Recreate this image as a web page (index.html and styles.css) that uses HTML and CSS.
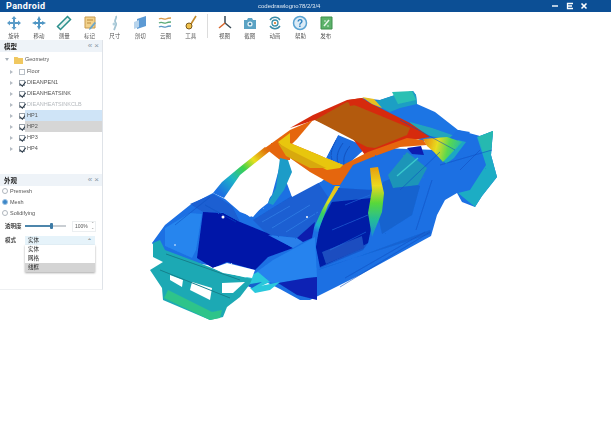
FILE: index.html
```html
<!DOCTYPE html>
<html lang="zh">
<head>
<meta charset="utf-8">
<title>Pandroid</title>
<link rel="stylesheet" href="styles.css">
</head>
<body>
<div class="app">
  <header class="titlebar">
    <span class="brand">Pandroid</span>
    <span class="doc">codedrawlogno78/2/3/4</span>
    <div class="winctl">
      <svg width="8" height="8" viewBox="0 0 8 8"><path d="M1 4h6" stroke="#fff" stroke-width="1.4"/></svg>
      <svg width="8" height="8" viewBox="0 0 8 8"><path d="M7 1.500H1.500v5H7M1.500 4H6" fill="none" stroke="#fff" stroke-width="1.3"/></svg>
      <svg width="8" height="8" viewBox="0 0 8 8"><path d="M1.500 1.500l5 5M6.500 1.500l-5 5" stroke="#fff" stroke-width="1.6"/></svg>
    </div>
  </header>

  <nav class="toolbar">
    <div class="tool"><svg width="16" height="16" viewBox="0 0 16 16"><path d="M8 1l2.500 3H9v3h3V5.500l3 2.500-3 2.500V9H9v3h1.500L8 15l-2.500-3H7V9H4v1.500L1 8l3-2.500V7h3V4H5.500z" fill="#5b9cc8"/></svg><span>旋转</span></div>
    <div class="tool"><svg width="16" height="16" viewBox="0 0 16 16"><path d="M8 1l2 4H9v2h2V6l4 2-4 2V9H9v2h1l-2 4-2-4h1V9H5v1L1 8l4-2v1h2V5H6z" fill="#4f96c4"/></svg><span>移动</span></div>
    <div class="tool"><svg width="16" height="16" viewBox="0 0 16 16"><path d="M11.500 1.500l3 3-10 10-3-3z" fill="#e8f4f2" stroke="#2a8f8c" stroke-width="1.500"/></svg><span>测量</span></div>
    <div class="tool"><svg width="16" height="16" viewBox="0 0 16 16"><path d="M3 2h10v11H3z" fill="#f2d28c" stroke="#c79a4e"/><path d="M5 5h6M5 8h4" stroke="#b98a3c"/><path d="M14 8l-5 6-2 1 .5-2 5-6z" fill="#6aa6cc"/></svg><span>标记</span></div>
    <div class="tool"><svg width="16" height="16" viewBox="0 0 16 16"><path d="M9 1c1 2-1 3-1 5s2 2 1 4-1 3-2 5" fill="none" stroke="#a3c4d3" stroke-width="1.800"/><circle cx="7" cy="9" r="1.500" fill="#b4d1de"/></svg><span>尺寸</span></div>
    <div class="tool"><svg width="16" height="16" viewBox="0 0 16 16"><path d="M5 4l9-3v10l-9 3z" fill="#5c9ad4"/><path d="M2 7l5-2v7l-5 2z" fill="#b8d4ec"/></svg><span>剖切</span></div>
    <div class="tool"><svg width="16" height="16" viewBox="0 0 16 16"><path d="M2 4c3-2 5 1 7 0s3-1 5-1" fill="none" stroke="#d99a4a" stroke-width="1.300"/><path d="M2 8c3-2 5 1 7 0s3-1 5-1" fill="none" stroke="#5aaa78" stroke-width="1.300"/><path d="M2 12c3-2 5 1 7 0s3-1 5-1" fill="none" stroke="#5a98c4" stroke-width="1.300"/></svg><span>云图</span></div>
    <div class="tool"><svg width="16" height="16" viewBox="0 0 16 16"><path d="M13 1L8 9" stroke="#c28a2c" stroke-width="1.600"/><circle cx="6" cy="11" r="3" fill="#f1c24c" stroke="#7a5a1e"/></svg><span>工具</span></div>
    <i class="sep"></i>
    <div class="tool"><svg width="16" height="16" viewBox="0 0 16 16"><path d="M8 1v7M8 8l6 5" fill="none" stroke="#3a4a55" stroke-width="1.500"/><path d="M8 8l-6 5" stroke="#d9652a" stroke-width="1.500"/></svg><span>视图</span></div>
    <div class="tool"><svg width="16" height="16" viewBox="0 0 16 16"><path d="M2 5h3l1-2h4l1 2h3v9H2z" fill="#5ba3c4"/><circle cx="8" cy="9" r="2.600" fill="#e6f3f8"/><circle cx="8" cy="9" r="1.300" fill="#3d86aa"/></svg><span>截图</span></div>
    <div class="tool"><svg width="16" height="16" viewBox="0 0 16 16"><path d="M3 5a6 6 0 0 1 10 0M13 11a6 6 0 0 1-10 0" fill="none" stroke="#3a8aa6" stroke-width="1.400"/><circle cx="8" cy="8" r="3" fill="none" stroke="#3a8fa8" stroke-width="1.300"/><circle cx="8" cy="8" r="1.100" fill="#d9762a"/></svg><span>动画</span></div>
    <div class="tool"><svg width="16" height="16" viewBox="0 0 16 16"><circle cx="8" cy="8" r="6.500" fill="#dcebf6" stroke="#5aa3d2" stroke-width="1.500"/><text x="8" y="11.500" class="qmark">?</text></svg><span>帮助</span></div>
    <div class="tool"><svg width="16" height="16" viewBox="0 0 16 16"><path d="M3 2h11v12H3z" fill="#5cb26a" stroke="#3f8f4d"/><path d="M6 11l5-6" stroke="#e8f6ea" stroke-width="1.500"/><path d="M6 6h2M9 11h2" stroke="#d8efdc"/></svg><span>发布</span></div>
  </nav>

  <main class="main">
    <aside class="side">
      <section class="panel tree-panel">
        <div class="phead"><b>模型</b><span class="pctl">«&nbsp;×</span></div>
        <div class="row root"><i class="arr down"></i>
          <svg class="folder" width="9" height="8" viewBox="0 0 9 8"><path d="M0 1h3.500l1 1H9v6H0z" fill="#f0c860"/></svg>
          <span>Geometry</span></div>
        <div class="row"><i class="arr"></i><i class="chk off"></i><span>Floor</span></div>
        <div class="row"><i class="arr"></i><i class="chk"></i><span>DIEANPEN1</span></div>
        <div class="row"><i class="arr"></i><i class="chk"></i><span>DIEANHEATSINK</span></div>
        <div class="row"><i class="arr"></i><i class="chk"></i><span class="dim">DIEANHEATSINKCLB</span></div>
        <div class="row"><i class="arr"></i><i class="chk"></i><span class="sel-b">HP1</span></div>
        <div class="row"><i class="arr"></i><i class="chk"></i><span class="sel-g">HP2</span></div>
        <div class="row"><i class="arr"></i><i class="chk"></i><span>HP3</span></div>
        <div class="row"><i class="arr"></i><i class="chk"></i><span>HP4</span></div>
      </section>
      <section class="panel set-panel">
        <div class="phead"><b>外观</b><span class="pctl">«&nbsp;×</span></div>
        <div class="radio"><i class="rd"></i><span>Premesh</span></div>
        <div class="radio"><i class="rd on"></i><span>Mesh</span></div>
        <div class="radio"><i class="rd"></i><span>Solidifying</span></div>
        <div class="form slider-row"><b>透明度</b>
          <div class="slider"><i class="thumb"></i></div>
          <div class="spin">100%<em>⌃<br>⌄</em></div>
        </div>
        <div class="form select-row"><b>模式</b>
          <div class="select"><span>实体</span><em>⌃</em>
            <ul class="list"><li>实体</li><li>网格</li><li class="cur">线框</li></ul>
          </div>
        </div>
      </section>
    </aside>

    <section class="view">
      <svg class="car" width="508" height="387" viewBox="103 40 508 387">
        <defs>
          <linearGradient id="ga" gradientUnits="userSpaceOnUse" x1="222" y1="195" x2="266" y2="150">
            <stop offset="0" stop-color="#1b6fe3"/><stop offset=".3" stop-color="#1fb5c6"/><stop offset=".55" stop-color="#3ed24a"/><stop offset=".75" stop-color="#eadf1e"/><stop offset="1" stop-color="#e0700c"/>
          </linearGradient>
          <linearGradient id="gb" gradientUnits="userSpaceOnUse" x1="372" y1="168" x2="372" y2="238">
            <stop offset="0" stop-color="#e8a00e"/><stop offset=".25" stop-color="#ecd920"/><stop offset=".5" stop-color="#58d83a"/><stop offset=".75" stop-color="#22bb9a"/><stop offset="1" stop-color="#1c88d8"/>
          </linearGradient>
          <linearGradient id="gc" gradientUnits="userSpaceOnUse" x1="337" y1="187" x2="315" y2="232">
            <stop offset="0" stop-color="#efb818"/><stop offset=".35" stop-color="#d8e020"/><stop offset=".6" stop-color="#38d060"/><stop offset=".85" stop-color="#1cb0d0"/><stop offset="1" stop-color="#1b6fe3"/>
          </linearGradient>
          <linearGradient id="gd" gradientUnits="userSpaceOnUse" x1="424" y1="140" x2="462" y2="150">
            <stop offset="0" stop-color="#ea8a0e"/><stop offset=".35" stop-color="#e8dc20"/><stop offset=".65" stop-color="#58d850"/><stop offset="1" stop-color="#20b8b0"/>
          </linearGradient>
          <filter id="rough" x="-5%" y="-5%" width="110%" height="110%">
            <feTurbulence type="fractalNoise" baseFrequency="0.6" numOctaves="2" seed="4" result="n"/>
            <feDisplacementMap in="SourceGraphic" in2="n" scale="1.500"/>
            <feGaussianBlur stdDeviation="0.400"/>
          </filter>
        </defs>
        <g filter="url(#rough)">
          <!-- far-side trunk -->
          <path d="M362 98L380 100 395 95 413 91 416 95 417 104 435 112 458 130 470 132 456 150 420 140 395 128Z" fill="#1c74e4"/>
          <path d="M370 102L380 100 395 95 413 91 416 95 417 104 400 108 390 112Z" fill="#1f9fc4"/>
          <path d="M392 92L412 91 416 100 398 104Z" fill="#2bc0b4"/>
          <path d="M410 122L432 128 458 137 456 141 430 136 412 130Z" fill="#22a5bc"/>
          <!-- main body -->
          <path d="M152 243L165 225 190 205 213 193 225 199 240 212 253 217 272 195 280 165 292 197 322 181 345 165 380 148 437 150 458 130 480 136 493 131 491 155 497 177 482 196 475 207 462 202 457 193 445 200 437 215 431 236 360 275 310 300 300 300 280 289 258 278 225 268 190 262 163 258Z" fill="#1b6fe3"/>
          <!-- arcs under roof -->
          <path d="M338 135L367 147 345 167 343 165 326 158Z" fill="#1a6ce0"/>
          <path d="M336 140C332 148 330 153 332 160M343 143C338 150 336 156 338 163M350 146C345 152 343 158 344 165" fill="none" stroke="#0f4bb8" stroke-width=".8"/>
          <!-- cowl interior -->
          <path d="M253 220L290 197 318 182 328 197 313 230 297 238 268 235Z" fill="#1a5fd2"/>
          <path d="M262 222L290 206M272 228L310 205M286 232L318 212" stroke="#3d8cec" stroke-width=".8" opacity=".7"/>
          <path d="M338 188L372 190 372 225 368 243 363 250 320 268 316 247 320 224Z" fill="#1458cc"/>
          <path d="M332 202L372 198 372 223 368 243 344 256 320 267 316 247 320 224Z" fill="#001aa6"/>
          <path d="M322 252L362 236 364 248 326 264Z" fill="#1a4ec0"/>
          <!-- rear door opening -->
          <path d="M383 182L395 177 420 186 412 215 382 234 378 215Z" fill="#1763cf"/>
          <path d="M388 175L407 152 427 168 418 185 393 188Z" fill="#1b95b8"/>
          <path d="M407 148L421 146 424 155 412 154Z" fill="#0a1fb0"/>
          <path d="M397 176L418 158" stroke="#3fd0d0" stroke-width="1.400" opacity=".9"/>
          <!-- rear quarter -->
          <path d="M458 193L475 207 482 196 497 177 491 155 493 131 477 137 486 165 470 190Z" fill="#1fadc4"/>
          <path d="M478 137L493 131 491 150 483 152Z" fill="#27b9b0"/>
          <path d="M443 160L458 140 466 142 454 158 446 164Z" fill="#1fa8c2"/>
          <!-- red surround of roof -->
          <path d="M290 128L313 115 347 100 362 98 370 103 410 123 423 132 430 137 407 141 378 152 365 155 350 135 315 120Z" fill="#d62c0c"/>
          <!-- roof plate -->
          <path d="M315 120L347 102 410 128 407 135 375 148 367 147Z" fill="#b35a10"/>
          <!-- orange rails -->
          <path d="M290 130L313 120 297 139 290 146Z" fill="#e5660b"/>
          <path d="M265 148L290 130 290 160 280 160Z" fill="#e5660b"/>
          <path d="M290 143L343 165 368 152 407 138 423 140 427 145 400 147 378 155 370 158 353 165 340 185 333 185 310 172 290 158Z" fill="#e5660b"/>
          <path d="M290 143L343 165 340 168 327 170 290 152Z" fill="#e8c60e"/>
          <path d="M278 142L290 133 290 152 284 148Z" fill="#e8c60e"/>
          <path d="M278 143L290 150 326 168 310 168 286 156Z" fill="#d8a90e"/>
          <path d="M348 100L362 98 368 103 350 106Z" fill="#d62c0c"/>
          <path d="M362 97L374 99 382 108 372 104Z" fill="#e8c020"/>
          <path d="M423 139L447 137 462 142 443 162 434 152 427 146Z" fill="url(#gd)"/>
          <!-- sunroof hole -->
          <path d="M313 123L338 135 330 150 326 158 297 143Z" fill="#fff"/>
          <!-- windshield -->
          <path d="M223 196L240 173 265 152 280 160 272 190 268 203 250 217 232 204Z" fill="#fff"/>
          <!-- side window -->
          <path d="M288 164L310 174 322 181 292 197Z" fill="#fff"/>
          <!-- A pillar -->
          <path d="M213 193L222 182 240 167 255 155 265 147 270 151 240 175 224 198Z" fill="url(#ga)"/>
          <!-- B pillar -->
          <path d="M370 168L378 167 384 193 382 212 372 237 368 213 372 190Z" fill="url(#gb)"/>
          <!-- front door pillar -->
          <path d="M335 186L340 186 328 205 318 232 312 232 322 210Z" fill="url(#gc)"/>
          <!-- C pillar -->
          <path d="M280 158L288 160 292 172 284 190 273 205 268 203 276 188Z" fill="#1c9cc8"/>
          <!-- hood left panel -->
          <path d="M165 228L190 213 202 214 196 250 192 258 165 246Z" fill="#2585ee"/>
          <!-- engine bay -->
          <path d="M203 212L223 213 240 222 267 233 293 248 268 257 255 270 227 262 213 268 197 258Z" fill="#0014a8"/>
          <path d="M190 204L213 194 232 206 240 222 222 212 203 212Z" fill="#1a5fd2"/>
          <path d="M268 235L297 238 303 242 293 248Z" fill="#2a80ea"/>
          <path d="M297 238L315 222 312 238 303 242Z" fill="#0a1cae"/>
          <!-- door sill -->
          <path d="M255 273L273 260 315 237 317 277 278 283 262 282Z" fill="#2583ee"/>
          <path d="M278 283L307 278 317 277 317 300 297 295Z" fill="#0a24b4"/>
          <path d="M245 278L258 272 270 282 253 290Z" fill="#2bc8dc"/>
          <path d="M250 288L280 282 270 290 255 293Z" fill="#2bc8dc"/>
          <path d="M245 285L262 282 252 288Z" fill="#1560cc"/>
          <path d="M322 268L431 234 430 230 360 256 318 270Z" fill="#1560cc" opacity=".7"/>
          <!-- front clip -->
          <path d="M153 243L160 240 165 250 197 262 222 272 252 279 250 284 240 297 227 307 223 317 210 320 163 300 162 288 150 270 163 262 153 257Z" fill="#1fa9b4"/>
          <path d="M164 298L168 290 212 312 222 310 220 318 210 320Z" fill="#2dc48a"/>
          <path d="M170 275L183 280 182 287 170 280ZM192 282L212 288 210 300 190 290Z" fill="#fff"/>
          <path d="M197 260L213 268 227 263 255 270 252 278 223 273Z" fill="#fff"/>
          <path d="M222 283L245 282 233 293 222 293Z" fill="#fff"/>
          <path d="M166 254L240 280M160 270L230 298" stroke="#14808c" stroke-width="1" fill="none"/>
          <!-- mottling -->
          <path d="M175 225L210 197M205 205L236 222M400 190L440 152M432 180L416 230M340 287L430 232M345 278L425 232M400 120L455 150M440 165L492 150M460 170L480 150" stroke="#0f4fc0" stroke-width=".7" fill="none" opacity=".8"/>
          <path d="M345 205L370 195M332 230L368 215M330 250L366 232" stroke="#2a74e0" stroke-width=".8" fill="none" opacity=".7"/>
        </g>
        <circle cx="175" cy="245" r=".8" fill="#fff"/><circle cx="307" cy="217" r="1" fill="#fff"/><circle cx="223" cy="217" r="1.500" fill="#fff"/>
      </svg>
    </section>
  </main>
</div>
</body>
</html>
```
FILE: styles.css
```css
* { box-sizing: border-box; }
html, body { margin: 0; height: 100%; background: #fff; overflow: hidden; }
body { font-family: "Noto Sans CJK SC", "Liberation Sans", sans-serif; color: #333; }
.app { width: 611px; height: 427px; display: flex; flex-direction: column; }

.titlebar { height: 12px; flex: none; background: #0c4f95; color: #fff; display: flex; align-items: center; position: relative; padding-left: 6px; }
.brand { font: bold 9px "Roboto", sans-serif; letter-spacing: .4px; }
.doc { position: absolute; left: 258px; top: 2px; font: 6px/8px "Liberation Sans", sans-serif; color: #dfe9f3; filter: blur(.3px); }
.winctl { margin-left: auto; margin-right: 23px; display: flex; gap: 6.500px; }

.toolbar { height: 28px; flex: none; display: flex; padding-left: 1px; background: #fff; }
.tool { width: 25.300px; display: flex; flex-direction: column; align-items: center; padding-top: 3px; filter: blur(.4px); }
.tool svg { display: block; }
.tool span { font-size: 5.500px; line-height: 7px; margin-top: 2px; color: #555; white-space: nowrap; }
.qmark { font: bold 10px "Liberation Sans", sans-serif; fill: #2c82c0; text-anchor: middle; }
.sep { width: 1px; height: 24px; margin: 2px 4px 0 3.500px; background: #dcdcdc; }

.main { flex: 1; display: flex; min-height: 0; }
.side { width: 103px; height: 250px; flex: none; border-right: 1px solid #dfe3e8; border-bottom: 1px solid #eef0f2; display: flex; flex-direction: column; }
.panel { display: flex; flex-direction: column; }
.tree-panel { height: 134px; }
.phead { height: 12px; flex: none; background: #eef3f8; display: flex; align-items: center; justify-content: space-between; padding: 0 3px 0 4px; font-size: 6.500px; color: #222; }
.phead b { filter: blur(.3px); }
.pctl { color: #8a97a5; font: 8px/10px "Liberation Sans", sans-serif; }

.row { height: 11px; flex: none; display: flex; align-items: center; padding-left: 10px; font: 5.500px/11px "Liberation Sans", sans-serif; color: #555; }
.row span { filter: blur(.35px); flex: 1; height: 11px; padding-left: 2px; white-space: nowrap; overflow: hidden; }
.row.root { padding-left: 5px; height: 13px; margin-top: 1px; }
.row.root span { flex: none; line-height: 13px; height: 13px; padding-left: 2px; }
.folder { margin-left: 5px; flex: none; }
.arr { width: 0; height: 0; border-left: 3px solid #b5bcc4; border-top: 2px solid transparent; border-bottom: 2px solid transparent; margin-right: 6px; flex: none; }
.arr.down { border-left: 2px solid transparent; border-right: 2px solid transparent; border-top: 3px solid #a8b0b8; border-bottom: 0; margin-right: 0; }
.chk { width: 6px; height: 6px; flex: none; border: 1px solid #9aa3ac; background: #fff; position: relative; }
.chk::after { content: ""; position: absolute; left: 1px; top: -1px; width: 2.500px; height: 4.500px; border: solid #2b3a48; border-width: 0 1px 1px 0; transform: rotate(40deg); }
.chk.off::after { display: none; }
.chk.off { border-color: #b8bfc6; }
.dim { color: #b5b9bd; }
.sel-b { background: #cfe4f7; }
.sel-g { background: #d6d6d6; }

.set-panel { flex: 1; }
.radio { height: 10.700px; flex: none; display: flex; align-items: center; padding-left: 2px; font: 5.500px/10px "Liberation Sans", sans-serif; color: #555; gap: 2px; }
.radio:first-of-type { margin-top: 2px; }
.radio span { filter: blur(.35px); }
.rd { width: 6px; height: 6px; border-radius: 50%; border: 1px solid #b0b7be; background: #fff; flex: none; }
.rd.on { background: #3a86c8; border-color: #9cc2e2; }
.form { display: flex; align-items: center; padding-left: 5px; font-size: 5.500px; color: #222; }
.form b { width: 20px; flex: none; font-weight: 500; filter: blur(.25px); white-space: nowrap; }
.slider-row { height: 14px; margin-top: 1px; }
.slider { width: 41px; height: 1.500px; background: linear-gradient(90deg, #4d86ab 0 66%, #c9ced3 66%); position: relative; flex: none; }
.thumb { position: absolute; left: 25px; top: -2.500px; width: 3px; height: 6px; background: #3d7ba6; border-radius: 1px; }
.spin { width: 24px; height: 11px; margin-left: 6px; border: 1px solid #eceff1; font: 5px/9px "Liberation Sans", sans-serif; padding-left: 2px; color: #555; position: relative; filter: blur(.25px); }
.spin em { position: absolute; right: 1px; top: 0; font: 4px/4px "Liberation Sans", sans-serif; color: #888; }
.select-row { height: 10px; margin-top: 2px; }
.select { width: 70px; height: 9px; background: #e6f3fa; display: flex; align-items: center; justify-content: space-between; padding: 0 3px; position: relative; }
.select span { filter: blur(.25px); }
.select em { font: 6px/6px "Liberation Sans", sans-serif; color: #555; margin-top: 2px; }
.list { position: absolute; left: 0; top: 9px; width: 70px; margin: 0; padding: 0; list-style: none; background: #fff; box-shadow: 0 1px 2px rgba(0,0,0,.35); }
.list li { height: 9px; line-height: 9px; padding-left: 3px; filter: blur(.2px); }
.list li.cur { background: #d4d4d4; }

.view { flex: 1; min-width: 0; background: #fff; }
.car { display: block; }
```
